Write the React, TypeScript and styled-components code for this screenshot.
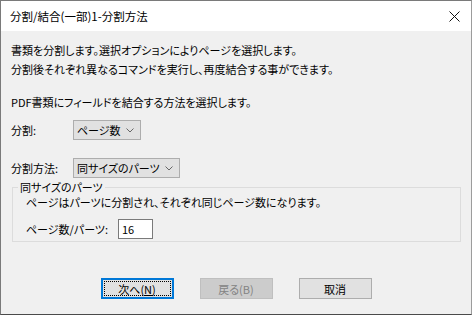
import React from 'react';
import styled, { createGlobalStyle } from 'styled-components';

const GlobalStyle = createGlobalStyle`
	html, body {
		margin: 0;
		padding: 0;
		background: #ffffff;
	}
	body {
		font-family: "Noto Sans CJK JP", "Noto Sans", sans-serif;
		font-size: 11px;
		font-feature-settings: "palt";
		color: #000000;
	}
`;

const Window = styled.div`
	width: 472px;
	height: 315px;
	box-sizing: border-box;
	border: 1px solid #7a7a7a;
	border-right-color: #9c9c9c;
	border-bottom-color: #4a4a4a;
	display: flex;
	flex-direction: column;
	background: #f0f0f0;
`;

const TitleBar = styled.div`
	height: 30px;
	flex: none;
	background: #ffffff;
	display: flex;
	align-items: center;
	justify-content: space-between;
	padding: 0 11px 0 9px;
	font-size: 11.5px;
`;

const CloseIcon = () => (
	<svg width="11" height="11" viewBox="0 0 11 11">
		<path d="M0.5 0.5 L10.5 10.5 M10.5 0.5 L0.5 10.5" stroke="#111" strokeWidth="1" fill="none" />
	</svg>
);

const Body = styled.div`
	flex: 1;
	display: flex;
	flex-direction: column;
	padding: 10px 0 0 10px;
`;

const Text = styled.div<{ $top?: number }>`
	line-height: 19px;
	margin-top: ${p => p.$top ?? 0}px;
	white-space: nowrap;
`;

const Row = styled.div<{ $top: number }>`
	display: flex;
	align-items: center;
	height: 20px;
	margin-top: ${p => p.$top}px;
	white-space: nowrap;
`;

const Label = styled.span<{ $width: number }>`
	width: ${p => p.$width}px;
	flex: none;
`;

const Select = styled.div<{ $width: number }>`
	width: ${p => p.$width}px;
	height: 20px;
	box-sizing: border-box;
	border: 1px solid #adadad;
	background: #e1e1e1;
	display: flex;
	align-items: center;
	justify-content: space-between;
	padding: 0 6px 0 3px;
	line-height: 18px;
	white-space: nowrap;
`;

const Chevron = () => (
	<svg width="8" height="5" viewBox="0 0 8 5">
		<polyline points="0.5,0.5 4,4 7.5,0.5" stroke="#666" strokeWidth="1" fill="none" />
	</svg>
);

const Group = styled.fieldset`
	margin: 2px 10px 0 1px;
	padding: 0 12px 2px 13px;
	border: 1px solid #dcdcdc;
	min-width: 0;
`;

const Legend = styled.legend`
	padding: 0 2px;
	margin-left: -8px;
	line-height: 14px;
`;

const Input = styled.div`
	width: 35px;
	height: 20px;
	box-sizing: border-box;
	border: 1px solid #7a7a7a;
	background: #ffffff;
	padding-left: 3px;
	line-height: 18px;
`;

const ButtonBar = styled.div`
	display: flex;
	justify-content: center;
	gap: 26px;
	margin-top: 36px;
	padding-right: 10px;
`;

const Button = styled.div<{ $default?: boolean; $disabled?: boolean }>`
	width: 73px;
	height: 21px;
	box-sizing: border-box;
	display: flex;
	align-items: center;
	justify-content: center;
	background: ${p => (p.$disabled ? '#cccccc' : '#e1e1e1')};
	border: ${p => (p.$default ? '2px solid #0078d7' : p.$disabled ? '1px solid #bfbfbf' : '1px solid #adadad')};
	color: ${p => (p.$disabled ? '#838383' : '#000000')};
	position: relative;
`;

const FocusRing = styled.div`
	position: absolute;
	inset: 1px;
	border: 1px dotted #000000;
`;

export default function App() {
	return (
		<>
			<GlobalStyle />
			<Window>
				<TitleBar>
					<span>分割/結合(一部)1-分割方法</span>
					<CloseIcon />
				</TitleBar>
				<Body>
					<Text>
						書類を分割します。選択オプションによりページを選択します。
						<br />
						分割後それぞれ異なるコマンドを実行し、再度結合する事ができます。
					</Text>
					<Text $top={14}>PDF書類にフィールドを結合する方法を選択します。</Text>
					<Row $top={8}>
						<Label $width={62}>分割:</Label>
						<Select $width={68}>
							<span>ページ数</span>
							<Chevron />
						</Select>
					</Row>
					<Row $top={18}>
						<Label $width={62}>分割方法:</Label>
						<Select $width={107}>
							<span>同サイズのパーツ</span>
							<Chevron />
						</Select>
					</Row>
					<Group>
						<Legend>同サイズのパーツ</Legend>
						<Text $top={-1}>ページはパーツに分割され、それぞれ同じページ数になります。</Text>
						<Row $top={7}>
							<Label $width={92}>ページ数/パーツ:</Label>
							<Input>16</Input>
						</Row>
					</Group>
					<ButtonBar>
						<Button $default>
							<FocusRing />
							<span>次へ(<u>N</u>)</span>
						</Button>
						<Button $disabled>戻る(B)</Button>
						<Button>取消</Button>
					</ButtonBar>
				</Body>
			</Window>
		</>
	);
}
